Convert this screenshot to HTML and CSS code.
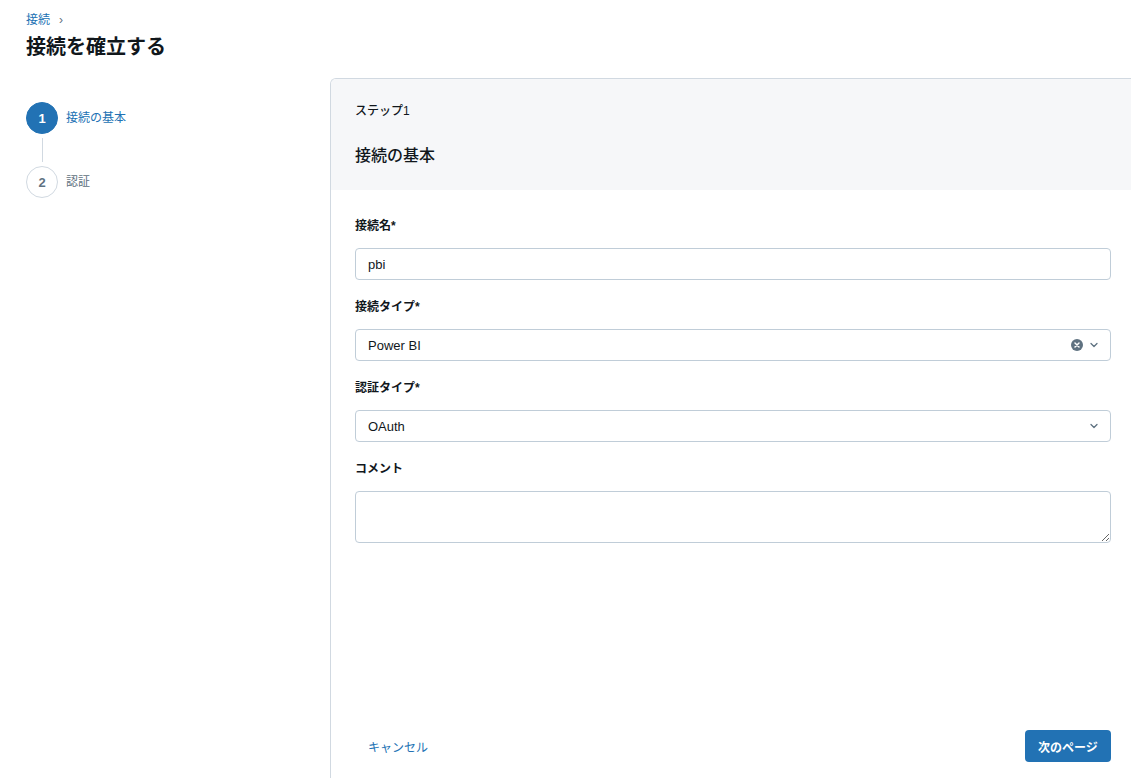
FILE: index.html
```html
<!DOCTYPE html>
<html lang="ja">
<head>
<meta charset="utf-8">
<title>接続を確立する</title>
<link rel="stylesheet" href="styles.css">
</head>
<body>
<div class="page">
  <div class="page-head">
    <div class="breadcrumb"><a class="crumb" href="#">接続</a><span class="crumb-sep">›</span></div>
    <h1 class="title">接続を確立する</h1>
  </div>
  <div class="main">
    <aside class="sidebar">
      <div class="step active">
        <div class="step-num">1</div>
        <div class="step-label">接続の基本</div>
      </div>
      <div class="step-line"></div>
      <div class="step">
        <div class="step-num">2</div>
        <div class="step-label">認証</div>
      </div>
    </aside>
    <section class="panel">
      <div class="panel-head">
        <div class="panel-step">ステップ1</div>
        <div class="panel-title">接続の基本</div>
      </div>
      <div class="panel-body">
        <div class="field">
          <label class="label">接続名*</label>
          <input class="control" type="text" value="pbi">
        </div>
        <div class="field">
          <label class="label">接続タイプ*</label>
          <div class="control select">
            <span class="select-value">Power BI</span>
            <span class="select-icons">
              <svg class="clear-icon" width="12" height="12" viewBox="0 0 12 12"><circle cx="6" cy="6" r="6" fill="#5f7281"/><path d="M4 4 L8 8 M8 4 L4 8" stroke="#fff" stroke-width="1.5" stroke-linecap="round"/></svg>
              <svg class="chev" width="10" height="10" viewBox="0 0 10 10"><path d="M2 3.5 L5 6.5 L8 3.5" fill="none" stroke="#5f7281" stroke-width="1.3" stroke-linecap="round" stroke-linejoin="round"/></svg>
            </span>
          </div>
        </div>
        <div class="field">
          <label class="label">認証タイプ*</label>
          <div class="control select">
            <span class="select-value">OAuth</span>
            <span class="select-icons">
              <svg class="chev" width="10" height="10" viewBox="0 0 10 10"><path d="M2 3.5 L5 6.5 L8 3.5" fill="none" stroke="#5f7281" stroke-width="1.3" stroke-linecap="round" stroke-linejoin="round"/></svg>
            </span>
          </div>
        </div>
        <div class="field">
          <label class="label">コメント</label>
          <textarea class="control textarea"></textarea>
        </div>
      </div>
      <div class="panel-foot">
        <button class="btn-link" type="button">キャンセル</button>
        <button class="btn-primary" type="button">次のページ</button>
      </div>
    </section>
  </div>
</div>
</body>
</html>
```

FILE: styles.css
```css
* { box-sizing: border-box; }
html, body { margin: 0; height: 100%; }
body {
  font-family: "Liberation Sans", "Noto Sans CJK JP", sans-serif;
  color: #11171c;
  background: #fff;
  font-size: 12px;
  overflow: hidden;
}
.page {
  display: flex;
  flex-direction: column;
  height: 100vh;
}
.page-head {
  padding: 12px 0 0 26px;
}
.breadcrumb {
  display: flex;
  align-items: center;
  height: 16px;
  line-height: 16px;
  font-size: 12px;
}
.crumb { color: #2272b4; text-decoration: none; }
.crumb-sep { color: #5f7281; margin-left: 9px; font-size: 12px; }
.title {
  margin: 5px 0 0;
  font-size: 20px;
  line-height: 28px;
  font-weight: 700;
  color: #11171c;
}
.main {
  flex: 1;
  display: flex;
  margin-top: 17px;
  min-height: 0;
}
.sidebar {
  width: 330px;
  flex: none;
  padding: 24px 0 0 26px;
}
.step {
  display: flex;
  align-items: center;
  gap: 8px;
}
.step-num {
  width: 32px;
  height: 32px;
  border-radius: 50%;
  border: 1px solid #d1d9e1;
  display: flex;
  align-items: center;
  justify-content: center;
  font-weight: 700;
  font-size: 13px;
  color: #5f7281;
  background: #fff;
}
.step.active .step-num {
  background: #2272b4;
  border-color: #2272b4;
  color: #fff;
}
.step-label {
  font-size: 12px;
  line-height: 16px;
  color: #5f7281;
}
.step.active .step-label { color: #2272b4; }
.step-line {
  width: 1px;
  height: 24px;
  background: #d1d9e1;
  margin: 4px 0 4px 16px;
}
.panel {
  flex: 1;
  display: flex;
  flex-direction: column;
  border: 1px solid #d1d9e1;
  border-right: none;
  border-bottom: none;
  border-top-left-radius: 6px;
  overflow: hidden;
}
.panel-head {
  background: #f6f7f9;
  padding: 24px 24px 22px 24px;
}
.panel-step {
  font-size: 12px;
  line-height: 16px;
  font-weight: 500;
}
.panel-title {
  margin-top: 25px;
  font-size: 16px;
  line-height: 24px;
  font-weight: 500;
}
.panel-body {
  flex: 1;
  padding: 28px 20px 0 24px;
}
.field {
  display: flex;
  flex-direction: column;
  margin-bottom: 19px;
}
.label {
  font-size: 12px;
  line-height: 16px;
  font-weight: 700;
  margin-bottom: 14px;
}
.control {
  width: 100%;
  height: 32px;
  border: 1px solid #c0cdd8;
  border-radius: 4px;
  padding: 0 11px 0 12px;
  font-family: inherit;
  font-size: 13px;
  color: #11171c;
  background: #fff;
  outline: none;
}
.select {
  display: flex;
  align-items: center;
  justify-content: space-between;
}
.select-icons {
  display: flex;
  align-items: center;
  gap: 6px;
}
.clear-icon, .chev { display: block; }
.textarea {
  height: 52px;
  padding: 8px 12px;
  resize: both;
}
.panel-foot {
  display: flex;
  justify-content: space-between;
  align-items: center;
  padding: 0 20px 16px 24px;
}
.btn-link {
  border: none;
  background: none;
  color: #2272b4;
  font-family: inherit;
  font-size: 12px;
  padding: 0 13px;
  height: 32px;
  cursor: pointer;
}
.btn-primary {
  border: none;
  background: #2272b4;
  color: #fff;
  font-family: inherit;
  font-size: 12px;
  font-weight: 700;
  height: 32px;
  width: 86px;
  border-radius: 4px;
  cursor: pointer;
}
```
